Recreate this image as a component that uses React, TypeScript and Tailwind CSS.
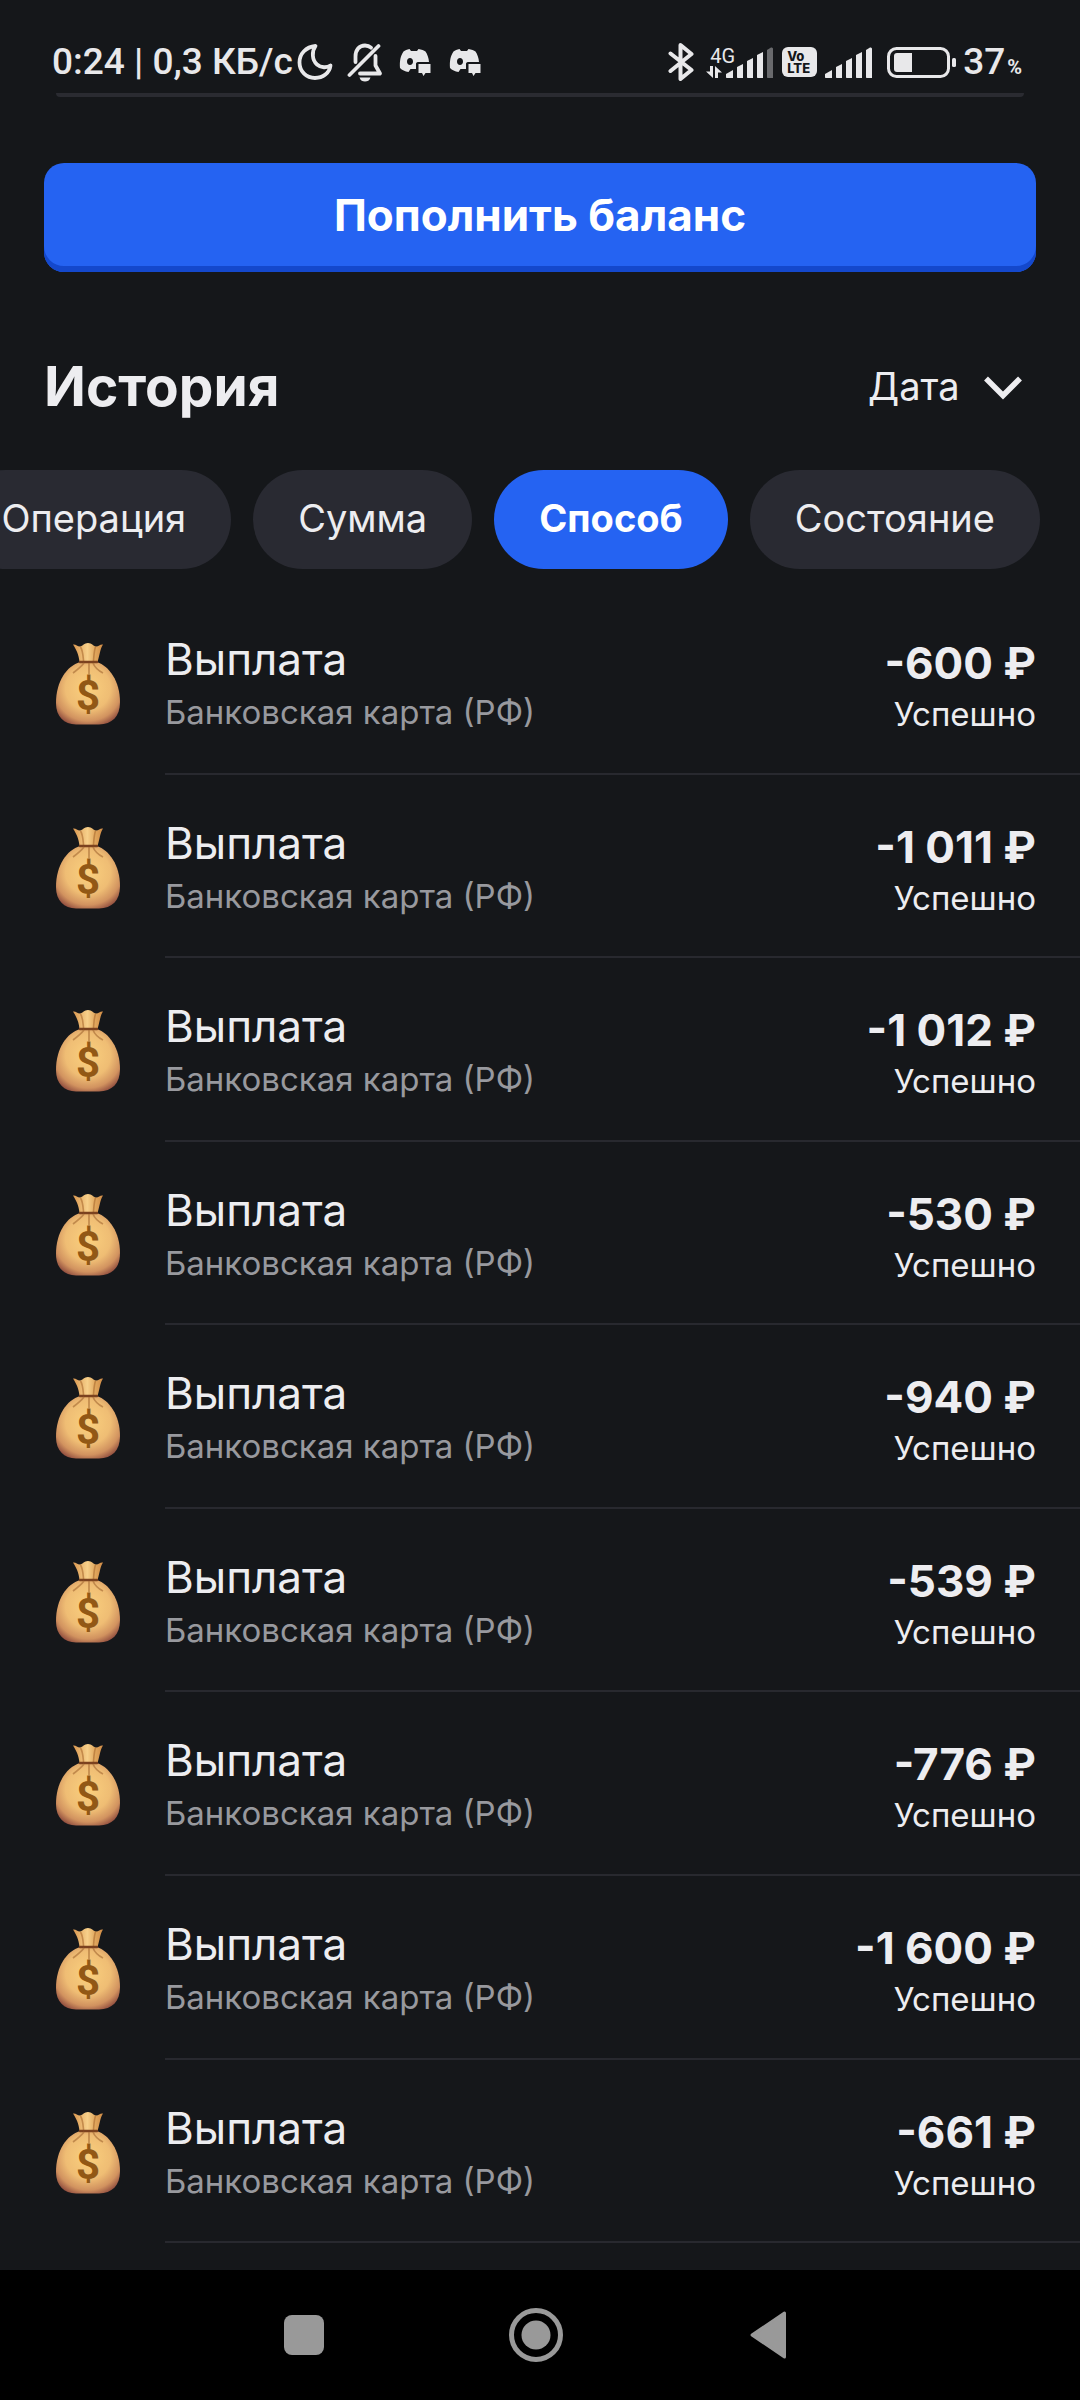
import { useState } from "react";
import clsx from "clsx";

interface Operation {
  id: number;
  title: string;
  method: string;
  amount: string;
  status: string;
}

const amounts = ["-600 ₽", "-1 011 ₽", "-1 012 ₽", "-530 ₽", "-940 ₽", "-539 ₽", "-776 ₽", "-1 600 ₽", "-661 ₽"];

const operations: Operation[] = amounts.map((amount, id) => ({
  id,
  title: "Выплата",
  method: "Банковская карта (РФ)",
  amount,
  status: "Успешно",
}));

const filters = ["Операция", "Сумма", "Способ", "Состояние"];

function MoonIcon() {
  return (
    <svg className="h-9 w-9 shrink-0" viewBox="0 0 36 36" fill="none" stroke="currentColor" strokeWidth="3.8" strokeLinejoin="round">
      <path d="M18.500 2C9 3 2.500 9.500 2.500 18.500C2.500 27.500 9.500 34 18 34C26 34 32.500 29 33.500 21.500C30 24 24 24 20 20.500C15 16 14.500 7.500 18.500 2Z" />
    </svg>
  );
}

function BellOffIcon() {
  return (
    <svg className="h-10 w-9 shrink-0" viewBox="0 0 36 40" fill="none" stroke="currentColor" strokeWidth="3.8" strokeLinecap="round" strokeLinejoin="round">
      <path d="M2.500 33L31.500 4" />
      <path d="M8.500 20V14.500C8.500 7.500 12.500 3.500 18 3.500C20.500 3.500 22.500 4.300 24 5.700" />
      <path d="M28.500 14V23.500L33 31.500H13" />
      <path d="M12.500 35.500H23.500C22.500 38.500 20.500 39.500 18 39.500C15.500 39.500 13.500 38.500 12.500 35.500Z" fill="currentColor" stroke="none" />
    </svg>
  );
}

function DiscordIcon() {
  return (
    <svg className="h-[28px] w-8 shrink-0" viewBox="0 0 32 28" fill="currentColor">
      <path
        fillRule="evenodd"
        d="M10.500 1L12 3H18L19.500 1C22.500 1.500 25 2.300 26.500 3.500C28.500 6.500 29.700 10 30 14H19C17.500 14 17 15 17 16V21H11.500L9.500 24C6 23.500 3 22 1 20C.5 13 1.500 8 4.500 3.500C6 2.300 8 1.500 10.500 1ZM11 10C9.200 10 8 11.500 8 13.500C8 15.500 9.200 17 11 17C12.800 17 14 15.500 14 13.500C14 11.500 12.800 10 11 10Z"
      />
      <path d="M19.500 16H31.500V25H26.500L24.500 28L23 25H19.500Z" />
    </svg>
  );
}

function BluetoothIcon() {
  return (
    <svg className="h-10 w-[26px] shrink-0" viewBox="0 0 26 40" fill="none" stroke="currentColor" strokeWidth="4" strokeLinecap="round" strokeLinejoin="round">
      <path d="M2.500 11.500L23.500 28L12.500 37V3L23.500 12L2.500 29" />
    </svg>
  );
}

function SignalBars({ weak = false }: { weak?: boolean }) {
  return (
    <svg className="h-[31px] w-12 shrink-0" viewBox="0 0 48 31" fill="currentColor">
      <path d="M0 27L7 23V31H1C.4 31 0 30.600 0 30Z" />
      <path d="M11 20L17 17V31H12C11.400 31 11 30.600 11 30Z" />
      <path d="M21 14L27 11V31H22C21.400 31 21 30.600 21 30Z" />
      <path d="M31 8L37 5V31H32C31.400 31 31 30.600 31 30Z" />
      <path d="M41 3L45 .5C46.500 .5 47 1 47 2V31H42C41.400 31 41 30.600 41 30Z" opacity={weak ? 0.4 : 1} />
    </svg>
  );
}

function DataArrows() {
  return (
    <svg className="h-3 w-4" viewBox="0 0 16 12" fill="currentColor">
      <path d="M4 0H7V12L0 5.500H4Z" />
      <path d="M9 0L16 6.500H12V12H9Z" />
    </svg>
  );
}

function BatteryIcon() {
  return (
    <svg className="h-[31px] w-[70px] shrink-0" viewBox="0 0 70 31">
      <rect x="1.500" y="1.500" width="60" height="28" rx="8" fill="none" stroke="currentColor" strokeWidth="3" />
      <path d="M10 6H25V25H10C8 25 7 24 7 22V9C7 7 8 6 10 6Z" fill="currentColor" />
      <rect x="65" y="11" width="4" height="9" rx="1.500" fill="currentColor" />
    </svg>
  );
}

function MoneyBag() {
  return (
    <svg className="h-[82px] w-16 shrink-0" viewBox="0 0 64 82">
      <defs>
        <radialGradient id="bag" cx="0.5" cy="0.42" r="0.64">
          <stop offset="0" stopColor="#fad07e" />
          <stop offset="0.55" stopColor="#efbd74" />
          <stop offset="0.82" stopColor="#d1925f" />
          <stop offset="1" stopColor="#935040" />
        </radialGradient>
        <linearGradient id="neck" x1="0" x2="1" y1="0" y2="0">
          <stop offset="0" stopColor="#d9964f" />
          <stop offset="0.48" stopColor="#f7d08a" />
          <stop offset="0.75" stopColor="#e0a65c" />
          <stop offset="1" stopColor="#cf8a45" />
        </linearGradient>
      </defs>
      <path d="M17 1.500C20 1 21 3.500 24 3.500C27 3 28 0 32 0C36 0 37 3 40 3.500C43 3.500 44 1 47 1.500C44 6 44 11 41.500 19H23.500C23 12 20 6 17 1.500Z" fill="url(#neck)" />
      <path d="M24.500 4C27 8 27 12 27.500 18M39.500 4C38 8 38 12 37.500 18" stroke="#a8692f" strokeWidth="1.600" fill="none" opacity="0.6" />
      <path d="M24 19H41C53 23 64 38 64 59C64 74 56 81 43 81.500H20C8 81 0 74 0 60C0 38 11 23 24 19Z" fill="url(#bag)" />
      <path d="M24 19H41" stroke="#7b421f" strokeWidth="2.500" strokeLinecap="round" />
      <path d="M28 20C25 24 21 27 17 30M33 20V31M37 20C39 25 43 28 47 30" stroke="#a96f37" strokeWidth="1.700" fill="none" opacity="0.65" />
      <text x="32" y="67" textAnchor="middle" className="fill-[#925815] font-['Roboto'] text-[42px] font-bold">$</text>
    </svg>
  );
}

function StatusBar() {
  return (
    <header className="px-13 font-['Roboto',sans-serif] text-[#e8e8ea]">
      <div className="flex h-[93px] items-end justify-between pr-[6px] pb-[10px]">
        <div className="flex items-center">
          <span className="text-[37px] leading-[42px] font-medium whitespace-nowrap">0:24 | 0,3 КБ/с</span>
          <span className="ml-1 flex items-center">
            <MoonIcon />
            <span className="ml-[14px] flex items-center gap-4">
              <BellOffIcon />
              <span className="flex items-center gap-[18px]">
                <DiscordIcon />
                <DiscordIcon />
              </span>
            </span>
          </span>
        </div>
        <div className="flex items-center">
          <BluetoothIcon />
          <div className="ml-3 flex items-end">
            <div className="flex w-5 flex-col">
              <span className="pl-1 text-[20px] leading-5">4G</span>
              <DataArrows />
            </div>
            <SignalBars weak />
          </div>
          <div className="ml-2 flex h-[30px] w-[35px] flex-col justify-center rounded-md bg-[#e8e8ea] pl-[5px] font-['Inter'] text-[13px] leading-[12px] font-extrabold text-[#15171a]">
            <span>Vo</span>
            <span>LTE</span>
          </div>
          <div className="ml-2 flex items-center gap-[14px]">
            <SignalBars />
            <BatteryIcon />
          </div>
          <div className="ml-[6px] flex items-baseline gap-[2px] font-medium">
            <span className="text-[37px] leading-[42px]">37</span>
            <span className="text-[20px] font-bold">%</span>
          </div>
        </div>
      </div>
      <div className="mx-1 h-1 rounded-b-full bg-[#2a2b31]" />
    </header>
  );
}

function SystemNav() {
  return (
    <nav className="flex h-[130px] items-center justify-center gap-[172px] bg-black pr-2 text-[#999]">
      <button aria-label="Недавние" className="flex w-15 justify-center">
        <span className="h-10 w-10 rounded-lg bg-current" />
      </button>
      <button aria-label="Домой" className="flex w-15 justify-center">
        <svg className="h-[54px] w-[54px]" viewBox="0 0 54 54">
          <circle cx="27" cy="27" r="24.500" fill="none" stroke="currentColor" strokeWidth="5" />
          <circle cx="27" cy="27" r="14.500" fill="currentColor" />
        </svg>
      </button>
      <button aria-label="Назад" className="flex w-15 justify-center">
        <svg className="h-[52px] w-[38px]" viewBox="0 0 38 52">
          <path d="M35.500 4V48L3 26Z" fill="currentColor" stroke="currentColor" strokeWidth="3" strokeLinejoin="round" />
        </svg>
      </button>
    </nav>
  );
}

export default function App() {
  const [activeFilter, setActiveFilter] = useState("Способ");

  return (
    <div className="flex min-h-screen flex-col bg-[#15171a] font-['Inter',sans-serif] text-[#ededf0]">
      <StatusBar />

      <main className="flex flex-1 flex-col pt-[66px]">
        <div className="px-11">
          <button className="h-[109px] w-full rounded-[20px] bg-[#2563f2] pb-[6px] text-[44px] font-bold text-white shadow-[inset_0_-6px_0_#1448cc]">
            Пополнить баланс
          </button>
        </div>

        <div className="mt-20 flex items-center justify-between px-11">
          <h1 className="text-[55px] leading-[68px] font-bold">История</h1>
          <div className="relative text-[38px]">
            <select aria-label="Сортировка" className="appearance-none bg-transparent pr-[76px] leading-[48px] outline-none">
              <option>Дата</option>
            </select>
            <svg className="pointer-events-none absolute top-[18px] right-[14px] h-6 w-[38px]" viewBox="0 0 38 24" fill="none" stroke="currentColor" strokeWidth="5.500">
              <path d="M2 2.500L19 19.500L36 2.500" />
            </svg>
          </div>
        </div>

        <div className="mt-[50px] flex justify-end gap-[22px] overflow-hidden pr-10">
          {filters.map((name) => (
            <button
              key={name}
              onClick={() => setActiveFilter(name)}
              className={clsx(
                "h-[99px] shrink-0 rounded-full px-[45px] pb-[2px] text-[38px]",
                activeFilter === name ? "bg-[#2563f2] font-bold text-white" : "bg-[#292a32]"
              )}
            >
              {name}
            </button>
          ))}
        </div>

        <ul className="mt-[22px] mb-[27px] flex flex-1 flex-col">
          {operations.map((item) => (
            <li key={item.id} className="flex min-h-[180px] flex-1 pl-14">
              <div className="w-[109px] shrink-0 pt-[52px]">
                <MoneyBag />
              </div>
              <div className="flex flex-1 justify-between border-b-2 border-[#28292f] pt-10 pr-11">
                <div>
                  <h2 className="text-[44px] leading-[56px]">{item.title}</h2>
                  <p className="text-[33px] leading-[50px] text-[#98999e]">{item.method}</p>
                </div>
                <div className="pt-1 text-right">
                  <p className="text-[44px] leading-[56px] font-bold">{item.amount}</p>
                  <p className="text-[33px] leading-[46px]">{item.status}</p>
                </div>
              </div>
            </li>
          ))}
        </ul>
      </main>

      <SystemNav />
    </div>
  );
}
